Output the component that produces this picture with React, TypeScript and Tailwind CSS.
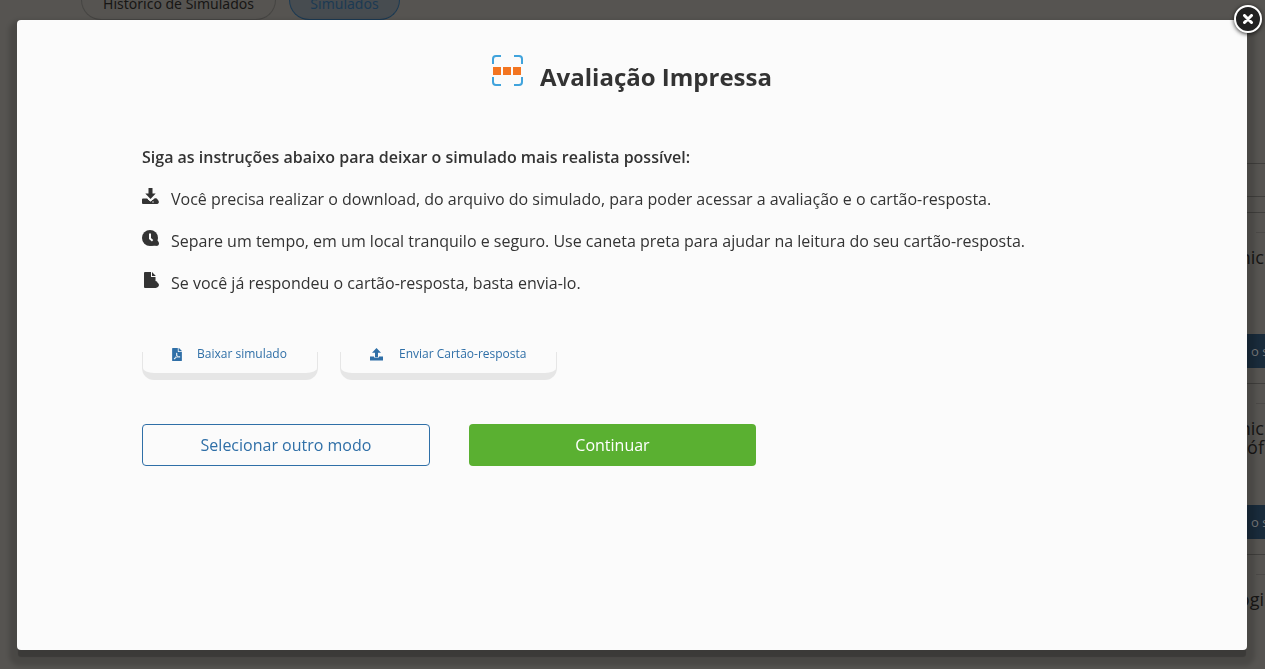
import { ReactNode } from "react";
import { FaFilePdf } from "react-icons/fa";

interface InstructionProps {
  icon: ReactNode;
  children: ReactNode;
}

const DownloadIcon = () => (
  <svg viewBox="0 0 17 17" className="size-[17px] shrink-0" fill="#333">
    <path d="M6.500 0h4v5.500h3.200L8.500 11 3.300 5.500h3.200z" />
    <path d="M1 10.500h4l3.500 2.700 3-2.200c1.500-1.300 4-.6 4.300 1 1.500.8 1.500 3.500-.6 4H1a1 1 0 0 1-1-1v-3.500a1 1 0 0 1 1-1z" />
    <path d="M6 11.200l2.500 1.800L12 10.400" fill="none" stroke="#fbfbfb" strokeWidth="1" />
    <circle cx="11" cy="14" r=".7" fill="#fbfbfb" />
  </svg>
);

const ClockIcon = () => (
  <svg viewBox="0 0 17 17" className="size-[17px] shrink-0" fill="#333">
    <circle cx="8" cy="8" r="8" />
    <path d="M15 10.500c2 1 2.500 3.200 1.500 4.500-.8 1-2 1-4 .8H8z" />
    <path d="M8 3.500v5l2.600 2.200" fill="none" stroke="#fbfbfb" strokeWidth="2" />
  </svg>
);

const FileIcon = () => (
  <svg viewBox="0 0 17 17" className="size-[17px] shrink-0" fill="#333">
    <path d="M3 0h6v5h4.500v4c1 0 2 .8 2 1.800 2 1 1.800 3.500 0 4.500-.5.500-1.500.7-3 .7H3a1 1 0 0 1-1-1V1a1 1 0 0 1 1-1z" />
    <path d="M10 0l3.800 4H10z" />
  </svg>
);

const UploadIcon = () => (
  <svg viewBox="0 0 13 13" className="size-[13px]" fill="#2f6fa7">
    <path d="M6.500 0L11 4.700H8V9H5V4.700H2z" />
    <path d="M0 8.500h4v1h5v-1h4v4H0z" />
  </svg>
);

const ScanIcon = () => (
  <svg viewBox="0 0 32 32" className="size-8" fill="none">
    <path
      d="M1 9V4a3 3 0 0 1 3-3h5M22 1h5a3 3 0 0 1 3 3v5M30 22v5a3 3 0 0 1-3 3h-5M9 30H4a3 3 0 0 1-3-3v-5"
      stroke="#40a3dc"
      strokeWidth="2"
    />
    <path d="M1 12h8v8H1zM11 12h8v8h-8zM21 12h8v8h-8z" fill="#f37521" />
  </svg>
);

const Instruction: React.FC<InstructionProps> = ({ icon, children }) => (
  <li className="flex items-start gap-3">
    <span className="pt-px">{icon}</span>
    <span className="leading-6">{children}</span>
  </li>
);

const subjects = [
  { id: 1, lines: ["nic"] },
  { id: 2, lines: ["nic", "óf"] },
  { id: 3, lines: ["ogi"] },
];

const Page = () => (
  <div className="min-h-screen overflow-hidden bg-[#565451]">
    <div className="flex h-5 items-end gap-[13px] pl-[81px] text-center font-['Noto_Sans',sans-serif] text-sm leading-6">
      <span className="w-[195px] rounded-b-[20px] border border-t-0 border-[#464543] pb-[3px] text-[#171615]">
        Histórico de Simulados
      </span>
      <span className="w-[111px] rounded-b-[20px] border border-t-0 border-[#1c3a53] bg-[#474c50] pb-[3px] text-[#1c3a53]">
        Simulados
      </span>
    </div>
    <div className="mt-[143px] ml-auto w-[25px] whitespace-nowrap">
      <div className="h-[33px] border-t border-[#403f3d]" />
      <div className="h-4 border-t border-[#403f3d]" />
      {subjects.map((subject) => (
        <div
          key={subject.id}
          className="flex h-[171px] flex-col border-t border-[#403f3d] pt-[19px]"
        >
          <div className="ml-4 border-t border-[#4b4947]" />
          <div className="flex h-[101px] flex-col items-end pt-[15px] pr-px text-lg leading-[19px] text-[#171615]">
            {subject.lines.map((line) => (
              <div key={line}>{line}</div>
            ))}
          </div>
          <div className="h-[34px] bg-[#192b3b] pl-[11px] text-[13px] leading-[34px] text-[#77787a]">
            o s
          </div>
        </div>
      ))}
    </div>
  </div>
);

export default function App() {
  return (
    <div className="h-screen overflow-hidden font-['Open_Sans',sans-serif]">
      <Page />
      <div className="fixed inset-0 flex pt-5 pr-[18px] pb-[19px] pl-[17px]">
        <div
          role="dialog"
          aria-labelledby="dialog-title"
          className="relative flex-1 rounded bg-[#fbfbfb] text-[#333] shadow-[0_8px_1px_-1px_rgba(0,0,0,0.2),0_8px_4px_8px_rgba(0,0,0,0.14)]"
        >
          <button
            type="button"
            aria-label="Fechar"
            className="absolute -top-[15px] -right-[15px] flex size-7 items-center justify-center rounded-full border-2 border-white bg-[#222] shadow-[0_1px_4px_rgba(0,0,0,0.8)]"
          >
            <svg viewBox="0 0 10 10" className="size-[10px]">
              <path d="M1.500 1.500l7 7M8.500 1.500l-7 7" stroke="#fff" strokeWidth="3" strokeLinecap="round" />
            </svg>
          </button>

          <header className="flex items-start justify-center gap-4 pt-[35px]">
            <ScanIcon />
            <h1 id="dialog-title" className="pt-1 text-2xl leading-9 font-bold">
              Avaliação Impressa
            </h1>
          </header>

          <div className="px-[125px] pt-[50px]">
            <p className="leading-6 font-semibold">
              Siga as instruções abaixo para deixar o simulado mais realista possível:
            </p>
            <ul className="mt-[18px] flex flex-col gap-[18px]">
              <Instruction icon={<DownloadIcon />}>
                Você precisa realizar o download, do arquivo do simulado, para poder acessar a
                avaliação e o cartão-resposta.
              </Instruction>
              <Instruction icon={<ClockIcon />}>
                Separe um tempo, em um local tranquilo e seguro. Use caneta preta para ajudar na
                leitura do seu cartão-resposta.
              </Instruction>
              <Instruction icon={<FileIcon />}>
                Se você já respondeu o cartão-resposta, basta envia-lo.
              </Instruction>
            </ul>

            <div className="mt-[57px] flex gap-[22px] text-xs text-[#2f6fa7]">
              <button
                type="button"
                className="flex h-7 w-44 flex-col rounded-b-xl border-x border-b-[7px] border-[#e6e6e6]"
              >
                <span className="flex h-1 items-center gap-[14px] pl-[28px]">
                  <FaFilePdf className="h-[13px] w-3" />
                  Baixar simulado
                </span>
              </button>
              <button
                type="button"
                className="flex h-7 w-[217px] flex-col rounded-b-xl border-x border-b-[7px] border-[#e6e6e6]"
              >
                <span className="flex h-1 items-center gap-4 pl-[29px]">
                  <UploadIcon />
                  Enviar Cartão-resposta
                </span>
              </button>
            </div>

            <div className="mt-11 flex gap-[39px]">
              <button
                type="button"
                className="h-[42px] w-72 rounded border border-[#2f6fa7] text-[#2f6fa7]"
              >
                Selecionar outro modo
              </button>
              <button type="button" className="h-[42px] w-[287px] rounded bg-[#5ab031] text-white">
                Continuar
              </button>
            </div>
          </div>
        </div>
      </div>
    </div>
  );
}
